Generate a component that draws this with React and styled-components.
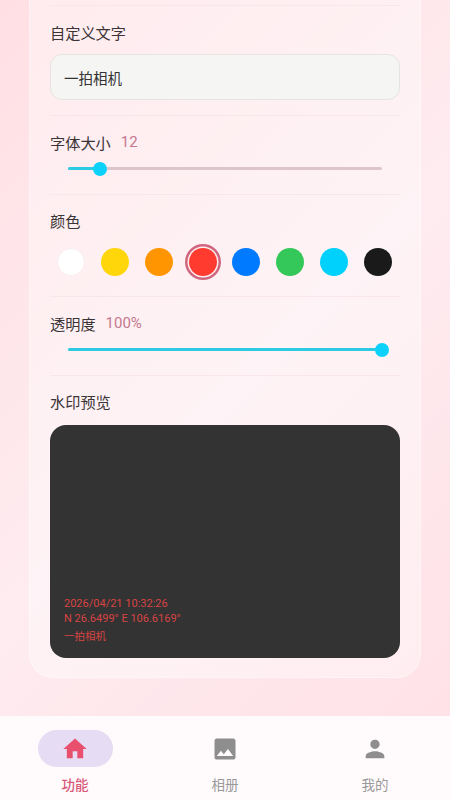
import React from 'react';
import styled, { createGlobalStyle } from 'styled-components';

const GlobalStyle = createGlobalStyle`
    html, body {
        margin: 0;
        padding: 0;
    }
    body {
        font-family: "Roboto", "Noto Sans CJK SC", sans-serif;
    }
`

const Page = styled.div`
    background: linear-gradient(135deg, #ffdfe4 0%, #feecf0 50%, #ffe0e6 100%);
    display: flex;
    flex-direction: column;
    height: 800px;
    overflow: hidden;
    width: 450px;
`

const Main = styled.main`
    flex: 1;
    min-height: 0;
    padding: 0 29px;
`

const Card = styled.section`
    background: rgba(255, 255, 255, 0.38);
    border: 1px solid rgba(255, 255, 255, 0.35);
    border-top: 0;
    border-radius: 0 0 24px 24px;
    box-sizing: border-box;
    height: 678px;
    padding: 5px 20px 0;
`

const Divider = styled.div`
    background: #f8e6ea;
    height: 1px;
`

const Section = styled.div`
    display: flex;
    flex-direction: column;
    height: ${props => props.$height}px;
`

const LabelRow = styled.div`
    align-items: center;
    display: flex;
    gap: 10px;
    height: 20px;
    margin-top: ${props => props.$top || 16}px;
`

const Label = styled.span`
    color: #3b3436;
    font-size: 15.2px;
`

const Value = styled.span`
    color: #c4788f;
    font-size: 15px;
`

const TextBox = styled.div`
    align-items: center;
    background: #f5f5f4;
    border: 1px solid #e6e4e2;
    border-radius: 12px;
    box-sizing: border-box;
    color: #333;
    display: flex;
    font-size: 14.5px;
    height: 46px;
    margin-top: 12px;
    padding: 0 13px;
`

const Track = styled.div`
    background: #dcc5cd;
    border-radius: 2px;
    height: 3px;
    margin: 15px 18px 0;
    position: relative;
`

const TrackFill = styled.div`
    background: #2ccbe2;
    border-radius: 2px;
    height: 100%;
`

const Thumb = styled.div`
    background: #0cd2fb;
    border-radius: 50%;
    height: 14px;
    position: absolute;
    top: -5.5px;
    transform: translateX(-50%);
    width: 14px;
`

const Swatches = styled.div`
    align-items: center;
    display: flex;
    justify-content: space-between;
    margin-top: 18px;
    padding: 0 8px 0 7px;
`

const Swatch = styled.div`
    background: ${props => props.$color};
    border-radius: 50%;
    box-sizing: border-box;
    height: 28px;
    width: 28px;
    ${props => props.$light && 'border: 1px solid #f8eef0;'}
    ${props => props.$selected && `box-shadow: 0 0 0 1.5px #ffeef0, 0 0 0 4px #cf667e;`}
`

const Preview = styled.div`
    background: #333333;
    border-radius: 16px;
    box-sizing: border-box;
    display: flex;
    flex-direction: column;
    height: 233px;
    justify-content: flex-end;
    margin-top: 14px;
    padding: 0 14px 14px;
`

const Stamp = styled.div`
    color: #d94343;
    font-size: 11px;
    line-height: 15px;
`

const StampName = styled(Stamp)`
    font-size: 10.5px;
    margin-top: 3px;
`

const Nav = styled.nav`
    background: #fffafc;
    display: flex;
    height: 84px;
`

const NavItem = styled.div`
    align-items: center;
    display: flex;
    flex: 1;
    flex-direction: column;
    padding-top: 14px;
`

const IconWrap = styled.div`
    align-items: center;
    background: ${props => props.$active ? '#e6dcf3' : 'transparent'};
    border-radius: 19px;
    display: flex;
    height: 37px;
    justify-content: center;
    width: 75px;
`

const NavIcon = styled.svg`
    fill: ${props => props.$active ? '#e8506e' : '#8e8e8e'};
    height: 28px;
    width: 28px;
`

const NavLabel = styled.span`
    color: ${props => props.$active ? '#d9597a' : '#999999'};
    font-size: 13.5px;
    font-weight: ${props => props.$active ? 500 : 400};
    margin-top: 7px;
`

const colors = ['#ffffff', '#ffd60a', '#ff9500', '#ff3b30', '#007aff', '#34c759', '#00d0fc', '#1a1a1a'];

const tabs = [
    { label: '功能', d: 'M10 20v-6h4v6h5v-8h3L12 3 2 12h3v8z', active: true },
    { label: '相册', d: 'M21 19V5c0-1.1-.9-2-2-2H5c-1.1 0-2 .9-2 2v14c0 1.1.9 2 2 2h14c1.1 0 2-.9 2-2zM8.5 13.5l2.5 3.01L14.5 12l4.5 6H5l3.5-4.5z' },
    { label: '我的', d: 'M12 12c2.21 0 4-1.79 4-4s-1.79-4-4-4-4 1.79-4 4 1.79 4 4 4zm0 2c-2.67 0-8 1.34-8 4v2h16v-2c0-2.66-5.33-4-8-4z' },
];

const Slider = ({ percent }) => (
    <Track>
        <TrackFill style={{ width: `${percent}%` }} />
        <Thumb style={{ left: `${percent}%` }} />
    </Track>
);

const App = () => (
    <Page>
        <GlobalStyle />
        <Main>
            <Card>
                <Divider />
                <Section $height={109}>
                    <LabelRow>
                        <Label>自定义文字</Label>
                    </LabelRow>
                    <TextBox>一拍相机</TextBox>
                </Section>
                <Divider />
                <Section $height={78}>
                    <LabelRow>
                        <Label>字体大小</Label>
                        <Value>12</Value>
                    </LabelRow>
                    <Slider percent={10.2} />
                </Section>
                <Divider />
                <Section $height={101}>
                    <LabelRow $top={15}>
                        <Label>颜色</Label>
                    </LabelRow>
                    <Swatches>
                        {colors.map((color, i) => (
                            <Swatch key={color} $color={color} $light={i === 0} $selected={i === 3} />
                        ))}
                    </Swatches>
                </Section>
                <Divider />
                <Section $height={78}>
                    <LabelRow>
                        <Label>透明度</Label>
                        <Value>100%</Value>
                    </LabelRow>
                    <Slider percent={100} />
                </Section>
                <Divider />
                <LabelRow $top={15}>
                    <Label>水印预览</Label>
                </LabelRow>
                <Preview>
                    <Stamp>2026/04/21 10:32:26</Stamp>
                    <Stamp>N 26.6499° E 106.6169°</Stamp>
                    <StampName>一拍相机</StampName>
                </Preview>
            </Card>
        </Main>
        <Nav>
            {tabs.map(tab => (
                <NavItem key={tab.label}>
                    <IconWrap $active={tab.active}>
                        <NavIcon viewBox="0 0 24 24" $active={tab.active}>
                            <path d={tab.d} />
                        </NavIcon>
                    </IconWrap>
                    <NavLabel $active={tab.active}>{tab.label}</NavLabel>
                </NavItem>
            ))}
        </Nav>
    </Page>
);

export default App;
